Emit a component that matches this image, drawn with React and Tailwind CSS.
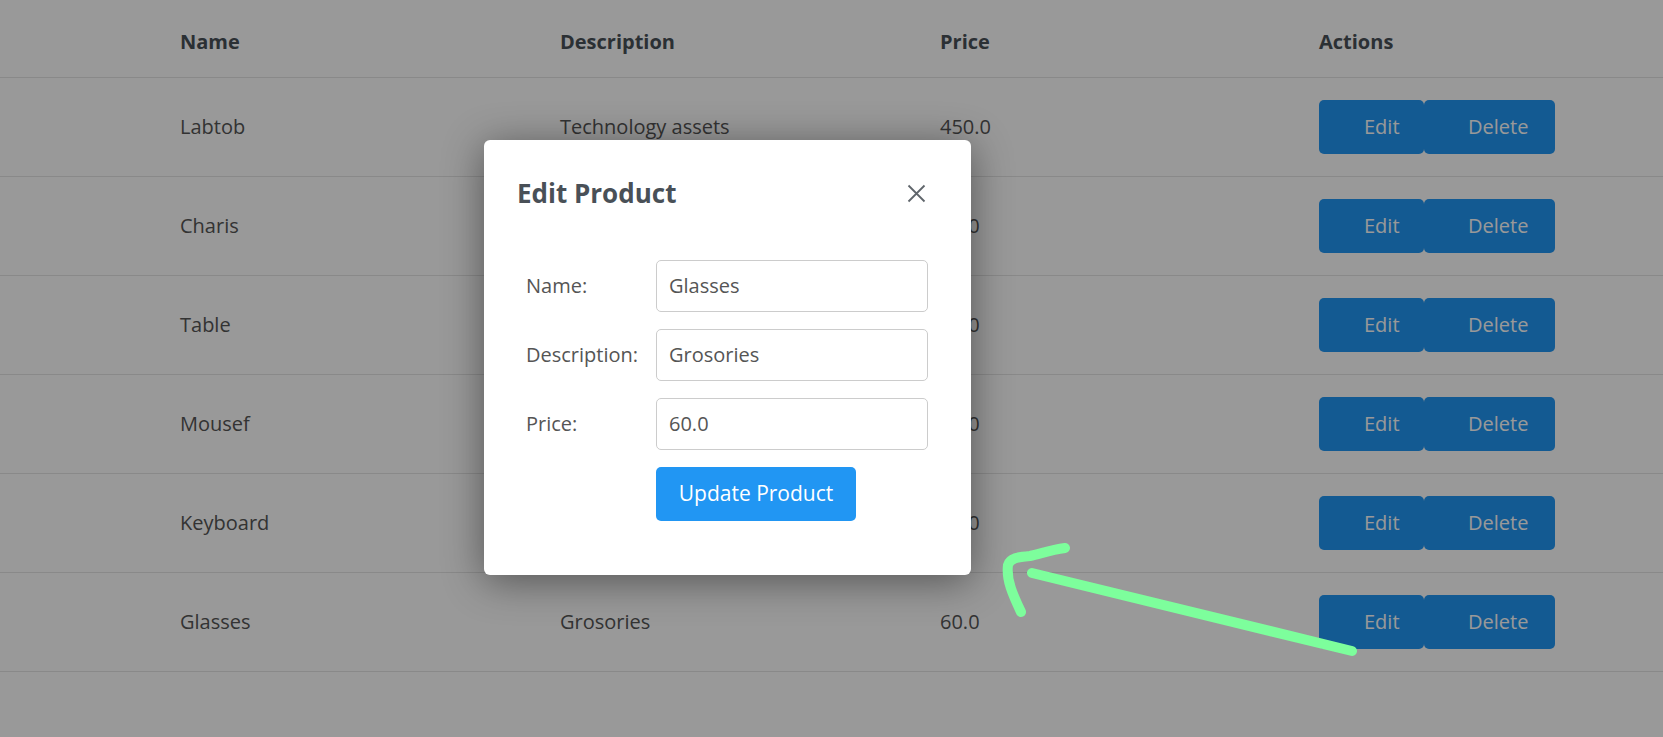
import React from "react";

const rows = [
  { name: "Labtob", desc: "Technology assets", price: "450.0" },
  { name: "Charis", desc: "Furniture", price: "80.0" },
  { name: "Table", desc: "Furniture", price: "90.0" },
  { name: "Mousef", desc: "Technology assets", price: "20.0" },
  { name: "Keyboard", desc: "Technology assets", price: "30.0" },
  { name: "Glasses", desc: "Grosories", price: "60.0" },
];

const font = { fontFamily: '"Open Sans", "Noto Sans", sans-serif' };

export default function App() {
  return (
    <div className="relative w-[1663px] h-[737px] overflow-hidden bg-white" style={font}>
      {/* table */}
      <div className="w-full">
        <div className="flex items-center h-[78px] pt-[6px] border-b border-[#e4e4e4] pl-[180px] text-[20px] font-bold text-[#495057]">
          <div className="w-[380px]">Name</div>
          <div className="w-[380px]">Description</div>
          <div className="w-[379px]">Price</div>
          <div>Actions</div>
        </div>
        {rows.map((r) => (
          <div
            key={r.name}
            className="flex items-center h-[99px] border-b border-[#e4e4e4] pl-[180px] text-[20px] text-[#555555]"
          >
            <div className="w-[380px]">{r.name}</div>
            <div className="w-[380px]">{r.desc}</div>
            <div className="w-[379px]">{r.price}</div>
            <div className="flex">
              <button className="h-[54px] w-[105px] pl-[45px] pr-[20px] text-left rounded-[5px] bg-[#2196f3] text-white text-[20px]">
                Edit
              </button>
              <button className="h-[54px] w-[131px] pl-[44px] pr-[20px] text-left rounded-[5px] bg-[#2196f3] text-white text-[20px]">
                Delete
              </button>
            </div>
          </div>
        ))}
      </div>

      {/* overlay */}
      <div className="absolute inset-0 bg-black/40" />

      {/* modal */}
      <div className="absolute left-[484px] top-[140px] w-[487px] h-[435px] bg-white rounded-[6px] shadow-[0_6px_40px_rgba(0,0,0,0.45)] pl-[33px] pr-[43px] pt-[30px]">
        <div className="flex items-center justify-between h-[46px]">
          <h2 className="text-[26px] font-bold text-[#495057]">Edit Product</h2>
          <svg width="19" height="19" viewBox="0 0 19 19" className="mr-[2px]">
            <path d="M1.5 1.5 L17.5 17.5 M17.5 1.5 L1.5 17.5" stroke="#5f656b" strokeWidth="1.8" fill="none" />
          </svg>
        </div>
        <div className="mt-[44px] flex flex-col gap-[17px] pl-[9px]">
          {[
            ["Name:", "Glasses"],
            ["Description:", "Grosories"],
            ["Price:", "60.0"],
          ].map(([label, value]) => (
            <div key={label} className="flex items-center">
              <label className="w-[130px] text-[20px] text-[#555555] whitespace-nowrap">{label}</label>
              <div className="w-[272px] h-[52px] border border-[#cccccc] rounded-[5px] flex items-center px-[12px] text-[20px] text-[#555555]">
                {value}
              </div>
            </div>
          ))}
          <div className="flex pl-[130px]">
            <button className="w-[200px] h-[54px] rounded-[5px] bg-[#2196f3] text-white text-[21px]">
              Update Product
            </button>
          </div>
        </div>
      </div>

      {/* annotation arrow */}
      <svg className="absolute left-0 top-0 pointer-events-none" width="1663" height="737">
        <path d="M1352 651 L1032 573" stroke="#7dfe9c" strokeWidth="10" strokeLinecap="round" fill="none" />
        <path
          d="M1065 548 C1050 550 1040 554 1030 556 C1018 557 1010 558 1008 565 C1006 580 1013 595 1021 612"
          stroke="#7dfe9c"
          strokeWidth="10"
          strokeLinecap="round"
          strokeLinejoin="round"
          fill="none"
        />
      </svg>
    </div>
  );
}
